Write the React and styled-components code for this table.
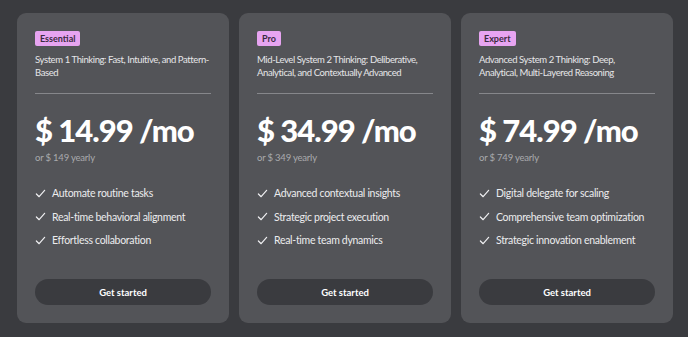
import React from 'react';
import styled, { createGlobalStyle } from 'styled-components';

const GlobalStyle = createGlobalStyle`
	html, body {
		margin: 0;
		padding: 0;
		background: #3a3b3f;
	}
	body {
		font-family: "Lato", "Noto Sans", sans-serif;
		color: #f2f2f3;
	}
`

const Page = styled.div`
	display: flex;
	gap: 10px;
	padding: 13px 15px 14px 17px;
	height: 337px;
	box-sizing: border-box;
`

const Card = styled.div`
	width: 212px;
	height: 310px;
	box-sizing: border-box;
	background: #535458;
	border-radius: 9px;
	padding: 18px;
	display: flex;
	flex-direction: column;
`

const Badge = styled.span`
	align-self: flex-start;
	background: #e7a4f1;
	color: #3a2a40;
	font-size: 9px;
	font-weight: 700;
	padding: 2px 5px;
	height: 15px;
	line-height: 11px;
	box-sizing: border-box;
	border-radius: 2px;
`

const Desc = styled.p`
	margin: 7px 0 0;
	font-size: 9.5px;
	letter-spacing: -0.4px;
	line-height: 13px;
	color: #e6e6e8;
	height: 26px;
`

const Divider = styled.hr`
	border: none;
	border-top: 1px solid #86878b;
	margin: 14px 0 0;
`

const Price = styled.div`
	margin-top: 16px;
	font-size: 31px;
	font-weight: 900;
	line-height: 40px;
	color: #ffffff;
	letter-spacing: -1px;
`

const Yearly = styled.div`
	font-size: 9.5px;
	letter-spacing: -0.2px;
	color: #a9aaad;
	margin-top: 2px;
`

const Features = styled.ul`
	list-style: none;
	margin: 23px 0 0;
	padding: 0;
	display: flex;
	flex-direction: column;
	gap: 9.5px;
`

const Feature = styled.li`
	display: flex;
	align-items: center;
	gap: 6px;
	font-size: 10.5px;
	letter-spacing: -0.3px;
	line-height: 14px;
	color: #ececee;
	white-space: nowrap;
`

const Button = styled.button`
	margin-top: auto;
	height: 26px;
	border: none;
	border-radius: 13px;
	background: #3a3b3f;
	color: #ffffff;
	font-family: inherit;
	font-size: 9.5px;
	font-weight: 700;
	cursor: pointer;
`

const Check = () => (
	<svg width="11" height="11" viewBox="0 0 12 12" fill="none">
		<path d="M1.5 6.5 L4.5 9.5 L10.5 2.5" stroke="#f0f0f2" strokeWidth="1.3" strokeLinecap="round" strokeLinejoin="round" />
	</svg>
)

const plans = [
	{
		tier: 'Essential',
		desc: 'System 1 Thinking: Fast, Intuitive, and Pattern-Based',
		price: '$ 14.99 /mo',
		yearly: 'or $ 149 yearly',
		features: ['Automate routine tasks', 'Real-time behavioral alignment', 'Effortless collaboration'],
	},
	{
		tier: 'Pro',
		desc: 'Mid-Level System 2 Thinking: Deliberative, Analytical, and Contextually Advanced',
		price: '$ 34.99 /mo',
		yearly: 'or $ 349 yearly',
		features: ['Advanced contextual insights', 'Strategic project execution', 'Real-time team dynamics'],
	},
	{
		tier: 'Expert',
		desc: 'Advanced System 2 Thinking: Deep, Analytical, Multi-Layered Reasoning',
		price: '$ 74.99 /mo',
		yearly: 'or $ 749 yearly',
		features: ['Digital delegate for scaling', 'Comprehensive team optimization', 'Strategic innovation enablement'],
	},
]

function App () {
	return (
		<>
			<GlobalStyle />
			<Page>
				{plans.map(p => (
					<Card key={p.tier}>
						<Badge>{p.tier}</Badge>
						<Desc>{p.desc}</Desc>
						<Divider />
						<Price>{p.price}</Price>
						<Yearly>{p.yearly}</Yearly>
						<Features>
							{p.features.map(f => (
								<Feature key={f}><Check />{f}</Feature>
							))}
						</Features>
						<Button>Get started</Button>
					</Card>
				))}
			</Page>
		</>
	)
}

export default App;
